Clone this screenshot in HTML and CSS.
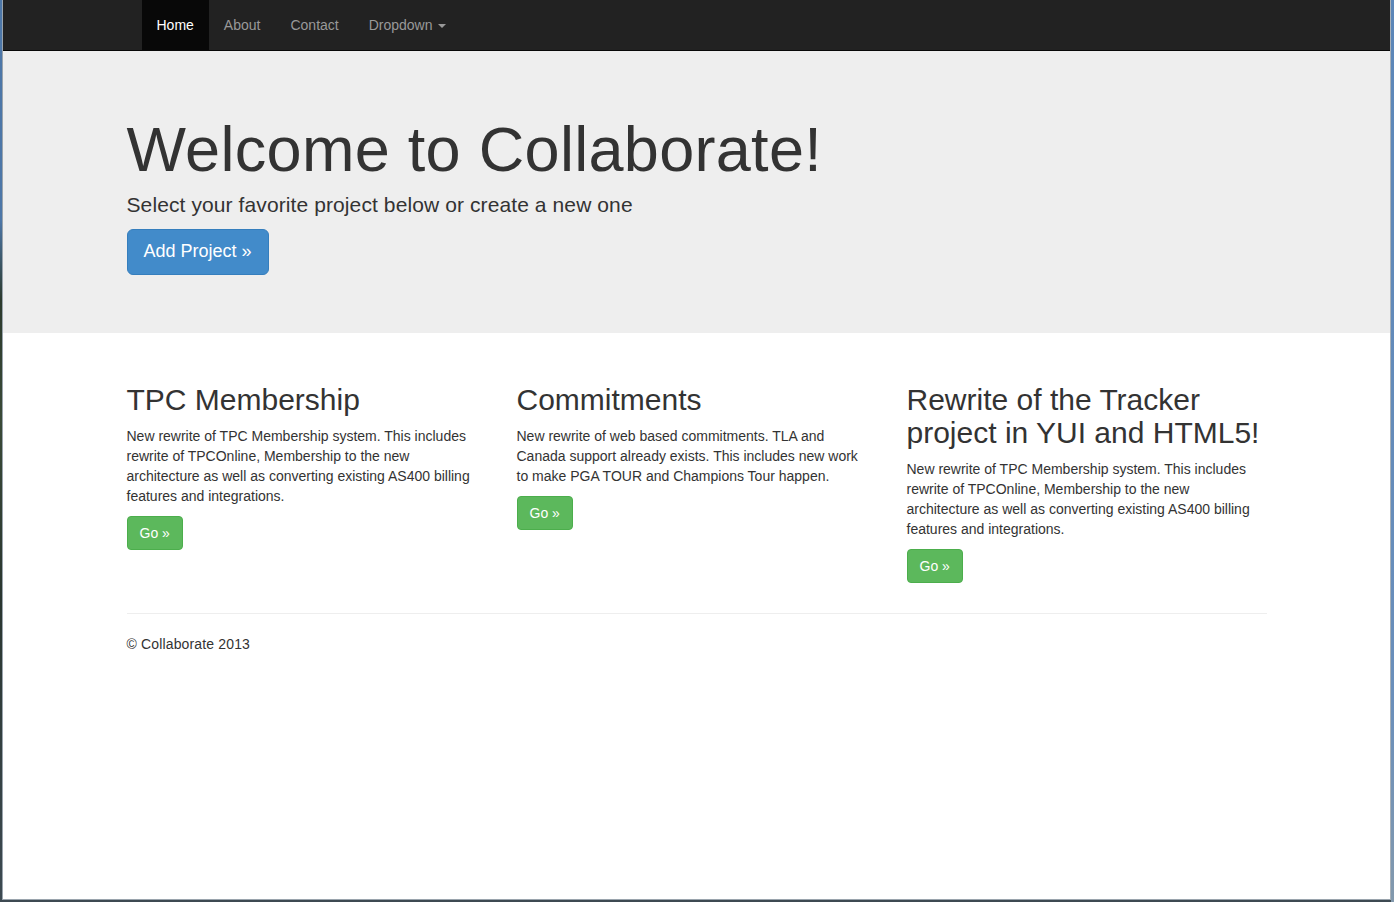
FILE: index.html
```html
<!DOCTYPE html>
<html lang="en">
<head>
<meta charset="utf-8">
<title>Collaborate</title>
<link rel="stylesheet" href="styles.css">
</head>
<body>
<div class="window">
  <nav class="navbar">
    <div class="container">
      <ul class="nav">
        <li class="active"><a href="#">Home</a></li>
        <li><a href="#">About</a></li>
        <li><a href="#">Contact</a></li>
        <li><a href="#">Dropdown <span class="caret"></span></a></li>
      </ul>
    </div>
  </nav>
  <div class="jumbotron">
    <div class="container">
      <h1>Welcome to Collaborate!</h1>
      <p>Select your favorite project below or create a new one</p>
      <p><a class="btn btn-primary btn-lg" href="#">Add Project &raquo;</a></p>
    </div>
  </div>
  <div class="container">
    <div class="row">
      <div class="col">
        <h2>TPC Membership</h2>
        <p>New rewrite of TPC Membership system. This includes rewrite of TPCOnline, Membership to the new architecture as well as converting existing AS400 billing features and integrations.</p>
        <p><a class="btn btn-success" href="#">Go &raquo;</a></p>
      </div>
      <div class="col">
        <h2>Commitments</h2>
        <p>New rewrite of web based commitments. TLA and Canada support already exists. This includes new work to make PGA TOUR and Champions Tour happen.</p>
        <p><a class="btn btn-success" href="#">Go &raquo;</a></p>
      </div>
      <div class="col">
        <h2>Rewrite of the Tracker project in YUI and HTML5!</h2>
        <p>New rewrite of TPC Membership system. This includes rewrite of TPCOnline, Membership to the new architecture as well as converting existing AS400 billing features and integrations.</p>
        <p><a class="btn btn-success" href="#">Go &raquo;</a></p>
      </div>
    </div>
    <hr>
    <footer>
      <p>&copy; Collaborate 2013</p>
    </footer>
  </div>
</div>
</body>
</html>
```
FILE: styles.css
```css
* { box-sizing: border-box; }
html, body { margin: 0; padding: 0; height: 902px; overflow: hidden; }
body {
  background:
    linear-gradient(#5b86b8, #6a8fbb 700px, #8399ad) right top / 3px 100% no-repeat,
    linear-gradient(#4d77a8 0, #4d77a8 220px, #2c3a2d 300px, #3a4a38 420px, #2a3630 600px, #3d4a52 902px);
  font-family: "Liberation Sans", Arial, sans-serif;
  font-size: 14px;
  line-height: 1.428571429;
  color: #333;
}
.window {
  margin: 0 3px 0 2px;
  height: 900px;
  background: #fff;
  border-left: 1px solid #9aa4ad;
  border-right: 1px solid #a9b1b8;
  border-bottom: 1px solid #9aa4ad;
  overflow: hidden;
}
a { text-decoration: none; }
.container {
  width: 1170px;
  margin: 0 auto;
  padding: 0 15px;
}
.navbar {
  height: 51px;
  background: #222;
  border-bottom: 1px solid #080808;
}
.nav {
  list-style: none;
  margin: 0;
  padding: 0 15px;
  display: flex;
}
.nav a {
  display: block;
  padding: 15px;
  line-height: 20px;
  color: #999;
}
.nav .active a { color: #fff; background: #080808; }
.caret {
  display: inline-block;
  width: 0;
  height: 0;
  margin-left: 2px;
  vertical-align: middle;
  border-top: 4px solid #999;
  border-left: 4px solid transparent;
  border-right: 4px solid transparent;
}
.jumbotron {
  padding: 47px 0 48px;
  margin-bottom: 30px;
  background: #eee;
  font-size: 21px;
  line-height: 2.1428571435;
}
.jumbotron h1 {
  font-size: 63px;
  font-weight: 500;
  line-height: 1;
  letter-spacing: 0.3px;
  margin: 20px 0 9px;
}
.jumbotron p {
  margin: 0 0 10px;
  line-height: 1.4;
  letter-spacing: 0.1px;
}
.btn {
  display: inline-block;
  padding: 6px 12px;
  font-size: 14px;
  line-height: 1.428571429;
  border: 1px solid transparent;
  border-radius: 4px;
  color: #fff;
  vertical-align: middle;
  white-space: nowrap;
  letter-spacing: 0;
}
.btn-lg {
  padding: 10px 16px;
  font-size: 18px;
  line-height: 1.33;
  border-radius: 6px;
}
.btn-primary { background: #428bca; border-color: #357ebd; }
.btn-success { background: #5cb85c; border-color: #4cae4c; }
.row {
  display: flex;
  margin: 0 -15px;
}
.col {
  width: 390px;
  padding: 0 15px;
}
.col h2 {
  font-size: 30px;
  font-weight: 500;
  line-height: 1.1;
  margin: 20px 0 10px;
}
.col p { margin: 0 0 10px; padding-right: 6px; }
hr {
  margin: 20px 0;
  border: 0;
  border-top: 1px solid #eee;
  height: 0;
}
footer p { margin: 0 0 10px; letter-spacing: 0.15px; }
```
